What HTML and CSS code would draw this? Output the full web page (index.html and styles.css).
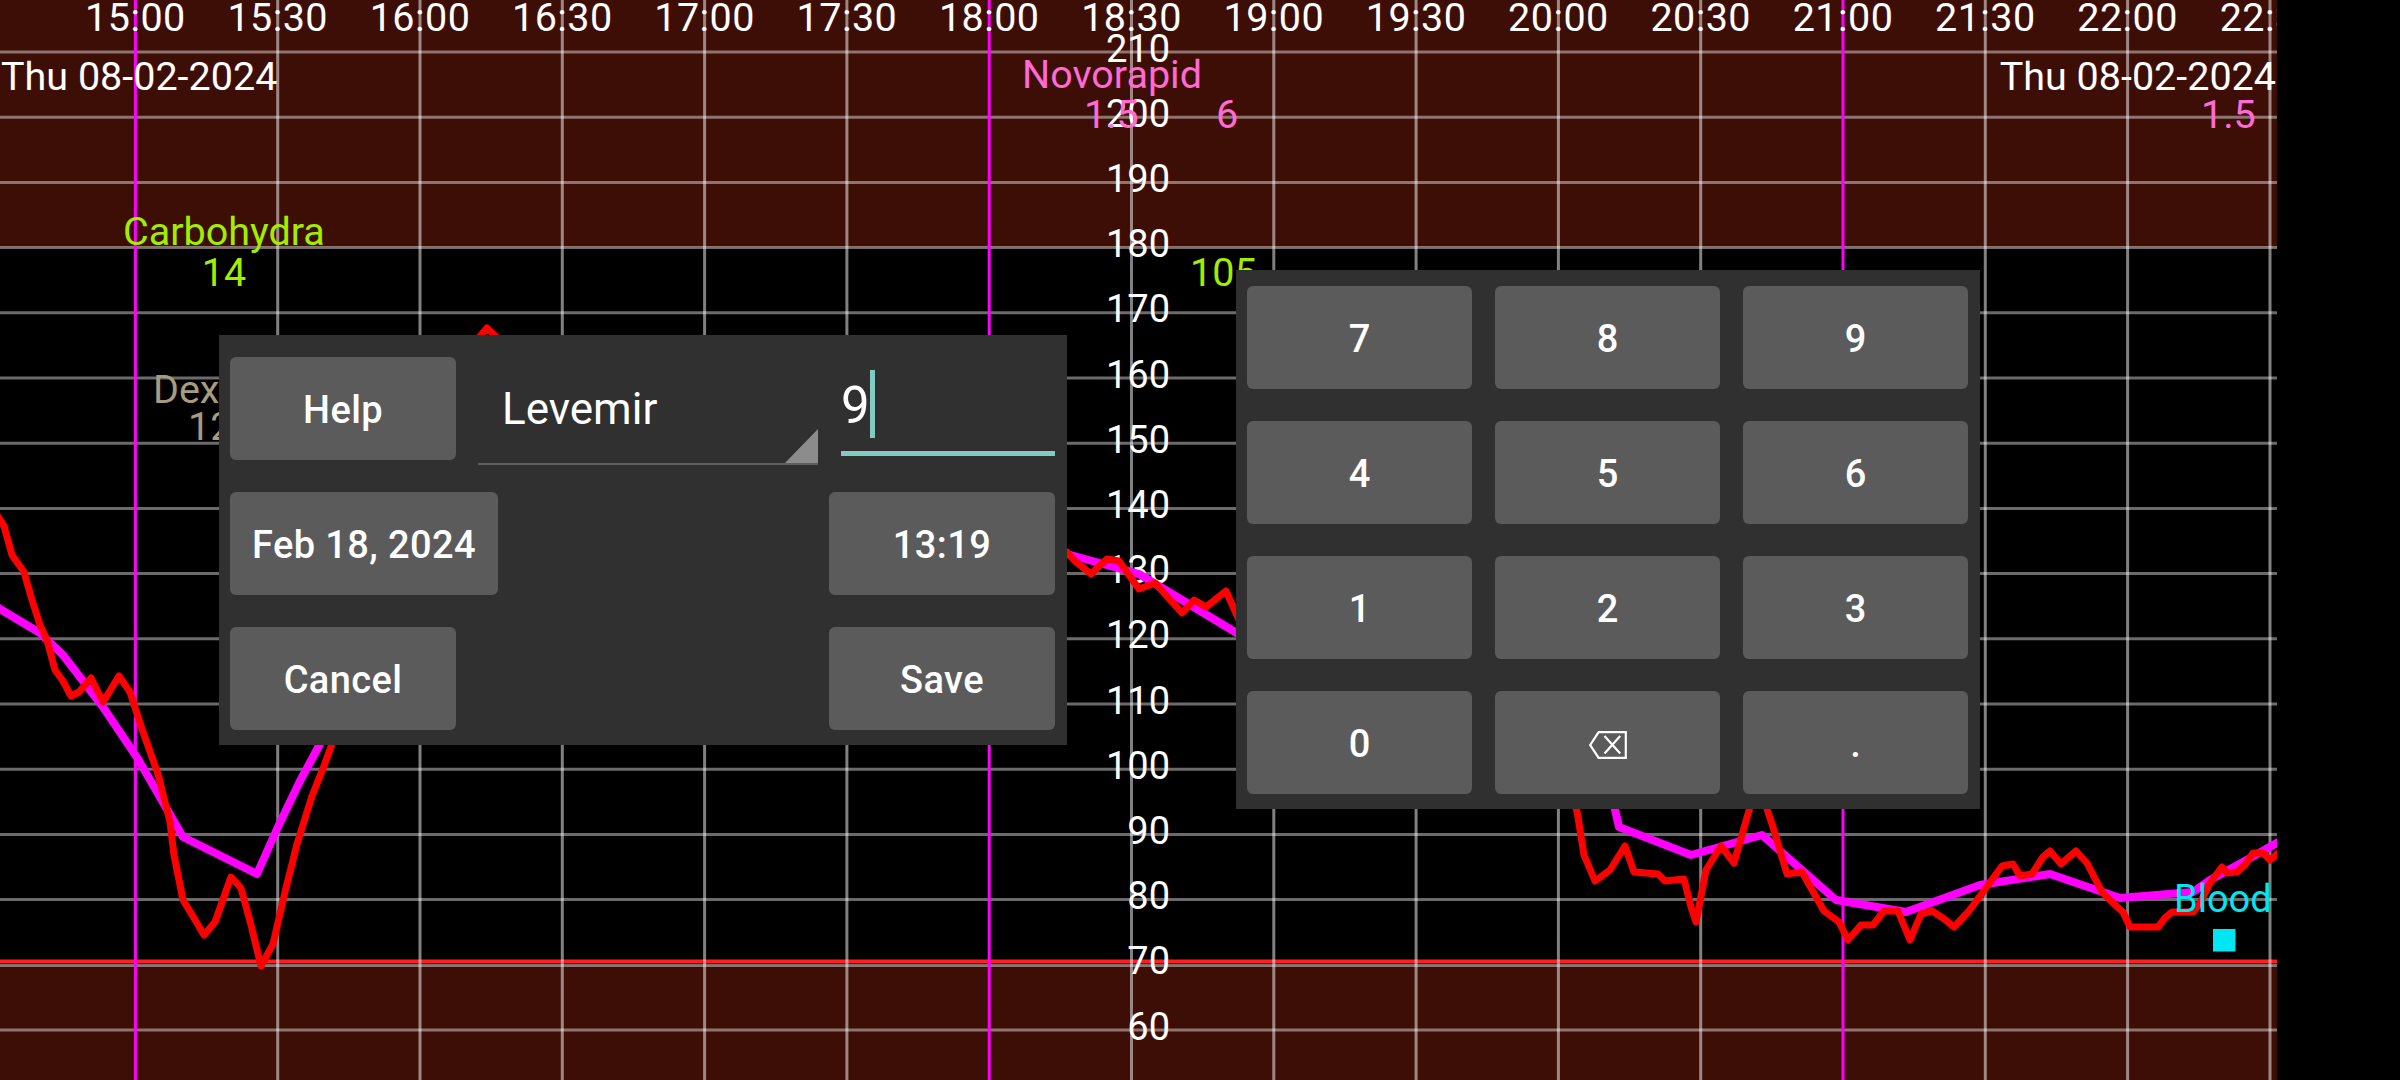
FILE: index.html
```html
<!DOCTYPE html>
<html lang="en">
<head>
<meta charset="utf-8">
<title>Insulin entry</title>
<link rel="stylesheet" href="styles.css">
</head>
<body>
<div class="screen">
  <div class="chart">
    <svg class="graph" width="2277" height="1080" viewBox="0 0 2277 1080">
      <rect class="zone" x="0" y="0" width="2277" height="247.6"/>
      <rect class="zone" x="0" y="964.8" width="2277" height="115.2"/>

      <g class="grid-h">
        <line x1="0" y1="52" x2="2277" y2="52"/>
        <line x1="0" y1="117.2" x2="2277" y2="117.2"/>
        <line x1="0" y1="182.4" x2="2277" y2="182.4"/>
        <line x1="0" y1="247.6" x2="2277" y2="247.6"/>
        <line x1="0" y1="312.8" x2="2277" y2="312.8"/>
        <line x1="0" y1="378" x2="2277" y2="378"/>
        <line x1="0" y1="443.2" x2="2277" y2="443.2"/>
        <line x1="0" y1="508.4" x2="2277" y2="508.4"/>
        <line x1="0" y1="573.6" x2="2277" y2="573.6"/>
        <line x1="0" y1="638.8" x2="2277" y2="638.8"/>
        <line x1="0" y1="704" x2="2277" y2="704"/>
        <line x1="0" y1="769.2" x2="2277" y2="769.2"/>
        <line x1="0" y1="834.4" x2="2277" y2="834.4"/>
        <line x1="0" y1="899.6" x2="2277" y2="899.6"/>
        <line x1="0" y1="965.5" x2="2277" y2="965.5"/>
        <line x1="0" y1="1030" x2="2277" y2="1030"/>
      </g>
      <line class="low-line" x1="0" y1="961.5" x2="2277" y2="961.5"/>

      <g class="grid-v">
        <line x1="277.7" y1="0" x2="277.7" y2="1080"/>
        <line x1="420" y1="0" x2="420" y2="1080"/>
        <line x1="562.3" y1="0" x2="562.3" y2="1080"/>
        <line x1="704.6" y1="0" x2="704.6" y2="1080"/>
        <line x1="846.9" y1="0" x2="846.9" y2="1080"/>
        <line x1="1131.5" y1="0" x2="1131.5" y2="1080"/>
        <line x1="1273.8" y1="0" x2="1273.8" y2="1080"/>
        <line x1="1416.1" y1="0" x2="1416.1" y2="1080"/>
        <line x1="1558.4" y1="0" x2="1558.4" y2="1080"/>
        <line x1="1700.7" y1="0" x2="1700.7" y2="1080"/>
        <line x1="1985.3" y1="0" x2="1985.3" y2="1080"/>
        <line x1="2127.6" y1="0" x2="2127.6" y2="1080"/>
        <line x1="2270" y1="0" x2="2270" y2="1080"/>
      </g>
      <g class="grid-mark">
        <line x1="135.4" y1="0" x2="135.4" y2="1080"/>
        <line x1="989.2" y1="0" x2="989.2" y2="1080"/>
        <line x1="1843" y1="0" x2="1843" y2="1080"/>
      </g>

      <g class="lbl-axis lbl-wide mid">
        <text x="135.4" y="31">15:00</text>
        <text x="277.7" y="31">15:30</text>
        <text x="420" y="31">16:00</text>
        <text x="562.3" y="31">16:30</text>
        <text x="704.6" y="31">17:00</text>
        <text x="846.9" y="31">17:30</text>
        <text x="989.2" y="31">18:00</text>
        <text x="1131.5" y="31">18:30</text>
        <text x="1273.8" y="31">19:00</text>
        <text x="1416.1" y="31">19:30</text>
        <text x="1558.4" y="31">20:00</text>
        <text x="1700.7" y="31">20:30</text>
        <text x="1843" y="31">21:00</text>
        <text x="1985.3" y="31">21:30</text>
        <text x="2127.6" y="31">22:00</text>
        <text x="2270" y="31">22:30</text>
      </g>

      <g class="lbl-axis end">
        <text x="1170" y="61.5">210</text>
        <text x="1170" y="126.7">200</text>
        <text x="1170" y="191.9">190</text>
        <text x="1170" y="257.1">180</text>
        <text x="1170" y="322.3">170</text>
        <text x="1170" y="387.5">160</text>
        <text x="1170" y="452.7">150</text>
        <text x="1170" y="517.9">140</text>
        <text x="1170" y="583.1">130</text>
        <text x="1170" y="648.3">120</text>
        <text x="1170" y="713.5">110</text>
        <text x="1170" y="778.7">100</text>
        <text x="1170" y="843.9">90</text>
        <text x="1170" y="909.1">80</text>
        <text x="1170" y="974.3">70</text>
        <text x="1170" y="1039.5">60</text>
      </g>

      <text class="lbl-axis lbl-label" x="1" y="90">Thu 08-02-2024</text>
      <text class="lbl-axis lbl-label end" x="2276" y="90">Thu 08-02-2024</text>

      <text class="lbl-ins lbl-label" x="1022" y="88">Novorapid</text>
      <text class="lbl-ins lbl-label" x="1084" y="128">1.5</text>
      <text class="lbl-ins lbl-label" x="1216" y="128">6</text>
      <text class="lbl-ins lbl-label" x="2201" y="128">1.5</text>

      <text class="lbl-carb lbl-label" x="123" y="245">Carbohydra</text>
      <text class="lbl-carb lbl-label mid" x="224" y="286">14</text>
      <text class="lbl-carb lbl-label" x="1190" y="286">105</text>

      <text class="lbl-dex lbl-label" x="153" y="403">Dex</text>
      <text class="lbl-dex lbl-label" x="188" y="440">12</text>

      <polyline class="curve-iob" points="-5,605 0,609 40,633 63,655 103,707 138,759 183,837 257,874 277,829 300,781 320,744 400,560 600,500 900,540 1067,554 1139,574 1240,635 1450,760 1614,805 1619,827 1691,855 1762,835 1836,900 1906,912 1980,885 2050,874 2120,898 2193,892 2210,880 2243,862 2282,840"/>

      <polyline class="curve-bg" points="-5,512 4,526 12,555 24,572 32,600 40,625 47,640 55,670 63,681 71,696 79,692 91,678 103,702 119,676 130,692 142,729 158,774 170,822 174,855 183,900 194,918 204,935 215,922 231,877 241,888 251,925 261,966 273,944 285,892 297,844 312,796 324,766 332,744 345,700 380,600 420,480 460,360 487,328 520,360 560,420 700,500 900,540 1067,552 1075,561 1091,574 1107,559 1119,561 1139,589 1155,583 1182,613 1194,600 1206,607 1226,591 1240,622 1400,700 1560,770 1577,811 1584,855 1595,881 1610,870 1625,846 1634,872 1658,874 1665,881 1684,879 1691,907 1696,922 1706,870 1721,846 1734,863 1752,800 1764,800 1773,827 1787,874 1802,872 1824,911 1839,922 1848,940 1861,925 1873,925 1884,911 1898,911 1910,940 1921,914 1932,911 1943,918 1954,927 1969,911 1983,892 2002,866 2013,864 2020,876 2032,874 2043,857 2050,851 2061,864 2076,851 2087,863 2102,892 2113,903 2123,912 2130,927 2158,927 2165,918 2172,912 2193,912 2200,903 2210,883 2222,867 2227,873 2237,872 2245,865 2253,853 2263,853 2270,860 2282,850"/>

      <text class="lbl-bg" x="2174" y="911.5">Blood</text>
      <rect class="bg-dot" x="2213" y="929" width="22.5" height="22.5"/>
    </svg>

    <div class="dialog">
      <div class="row row-top">
        <div class="btn btn-std">Help</div>
        <div class="spinner">Levemir</div>
        <div class="edit">9<span class="caret"></span></div>
      </div>
      <div class="row row-split">
        <div class="btn btn-date">Feb 18, 2024</div>
        <div class="btn btn-std">13:19</div>
      </div>
      <div class="row row-split">
        <div class="btn btn-std">Cancel</div>
        <div class="btn btn-std">Save</div>
      </div>
    </div>

    <div class="keypad">
      <div class="key">7</div>
      <div class="key">8</div>
      <div class="key">9</div>
      <div class="key">4</div>
      <div class="key">5</div>
      <div class="key">6</div>
      <div class="key">1</div>
      <div class="key">2</div>
      <div class="key">3</div>
      <div class="key">0</div>
      <div class="key key-icon">
        <svg class="bksp" width="38" height="28" viewBox="0 0 38 28">
          <path d="M1.2 14 L9.6 1.2 H36.8 V26.8 H9.6 Z"/>
          <path d="M15.5 5 L31.2 22.6 M31.2 5 L15.5 22.6"/>
        </svg>
      </div>
      <div class="key">.</div>
    </div>
  </div>
  <div class="edge"></div>
</div>
</body>
</html>
```

FILE: styles.css
```css
html, body {
  margin: 0;
  padding: 0;
  background: #000;
}

.screen {
  display: flex;
  width: 2400px;
  height: 1080px;
  overflow: hidden;
  font-family: Roboto, "Liberation Sans", sans-serif;
}

.chart {
  position: relative;
  width: 2277px;
  height: 1080px;
  overflow: hidden;
  background: #000;
  flex: none;
}

.edge {
  flex: 1;
  background: #000;
}

.graph {
  display: block;
}

.graph text {
  font-family: Roboto, "Liberation Sans", sans-serif;
  font-size: 38px;
}

.graph .lbl-label {
  font-size: 39.5px;
  letter-spacing: 0;
}

.graph .lbl-wide text {
  font-size: 39.5px;
  letter-spacing: 0.45px;
}

.zone { fill: #3d0e06; }

.grid-h line {
  stroke: rgba(255, 255, 255, 0.42);
  stroke-width: 3;
}

.grid-v line {
  stroke: rgba(255, 255, 255, 0.5);
  stroke-width: 3;
}

.grid-mark line {
  stroke: #ff00ff;
  stroke-width: 3;
}

.low-line {
  stroke: #ff1f1f;
  stroke-width: 4;
}

.lbl-axis { fill: #ffffff; }
.lbl-ins { fill: #ff6ad5; }
.lbl-carb { fill: #a2ee00; }
.lbl-dex { fill: #a89c80; }
.lbl-bg { fill: #00e6f2; }

.mid { text-anchor: middle; }
.end { text-anchor: end; }

.curve-iob {
  fill: none;
  stroke: #ff00ff;
  stroke-width: 8;
  stroke-linejoin: round;
  stroke-linecap: round;
}

.curve-bg {
  fill: none;
  stroke: #ff0000;
  stroke-width: 7;
  stroke-linejoin: round;
  stroke-linecap: round;
}

.bg-dot { fill: #00e6f2; }

/* Dialog */
.dialog {
  position: absolute;
  left: 219px;
  top: 335px;
  width: 848px;
  height: 410px;
  box-sizing: border-box;
  padding: 22px 12px 15px 11px;
  background: #303030;
  display: flex;
  flex-direction: column;
  gap: 32px;
}

.row {
  display: flex;
  height: 103px;
  align-items: flex-start;
}

.row-split {
  justify-content: space-between;
}

.btn {
  height: 103px;
  box-sizing: border-box;
  padding-top: 3px;
  background: #5b5b5b;
  border-radius: 6px;
  color: #fff;
  font-family: Roboto, "Liberation Sans", sans-serif;
  font-weight: 500;
  font-size: 38px;
  letter-spacing: 0.4px;
  display: flex;
  align-items: center;
  justify-content: center;
  flex: none;
}

.btn-std { width: 226px; }
.btn-date { width: 268px; }

.spinner {
  position: relative;
  margin-left: 22px;
  width: 340px;
  height: 108px;
  box-sizing: border-box;
  border-bottom: 2px solid #5e5e5e;
  padding: 26px 0 0 24px;
  color: #fff;
  font-size: 44px;
  line-height: normal;
  flex: none;
}

.spinner::after {
  content: "";
  position: absolute;
  right: 0;
  bottom: 0;
  width: 0;
  height: 0;
  border-left: 33px solid transparent;
  border-bottom: 34px solid #8c8c8c;
}

.edit {
  margin-left: 23px;
  width: 214px;
  height: 99px;
  box-sizing: border-box;
  border-bottom: 5px solid #80cbc4;
  padding-top: 13px;
  color: #fff;
  font-size: 51px;
  line-height: normal;
  white-space: nowrap;
  flex: none;
}

.caret {
  display: inline-block;
  width: 5px;
  height: 68px;
  background: #80cbc4;
  vertical-align: -15px;
}

/* Keypad */
.keypad {
  position: absolute;
  left: 1236px;
  top: 270px;
  width: 744px;
  height: 539px;
  box-sizing: border-box;
  padding: 16px 11px 15px 11px;
  background: #303030;
  display: grid;
  grid-template-columns: repeat(3, 225px);
  grid-auto-rows: 103px;
  column-gap: 23px;
  row-gap: 32px;
}

.key {
  background: #5b5b5b;
  border-radius: 6px;
  color: #fff;
  font-family: Roboto, "Liberation Sans", sans-serif;
  font-weight: 500;
  font-size: 38px;
  box-sizing: border-box;
  padding-top: 3px;
  display: flex;
  align-items: center;
  justify-content: center;
}

.key-icon {
  padding-top: 5px;
}

.bksp {
  display: block;
}

.bksp path {
  fill: none;
  stroke: #fff;
  stroke-width: 2.2;
  stroke-linejoin: miter;
}
```
